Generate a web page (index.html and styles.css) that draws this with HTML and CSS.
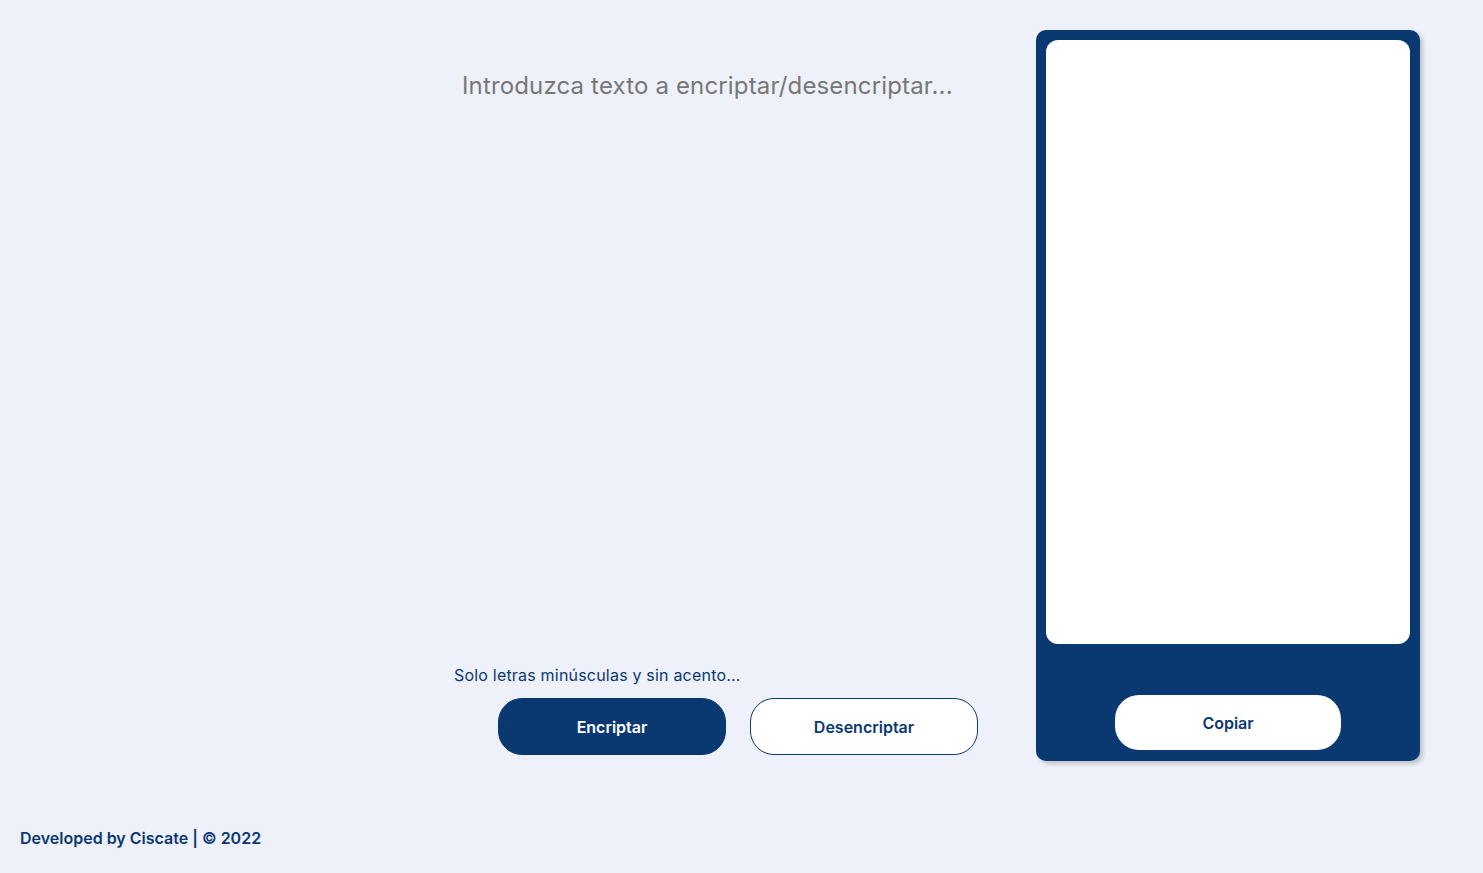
FILE: index.html
```html
<!DOCTYPE html>
<html lang="es">
<head>
<meta charset="utf-8">
<title>Encriptador</title>
<link rel="stylesheet" href="styles.css">
</head>
<body>
<div class="page">
  <main class="main">
    <section class="editor">
      <textarea class="input" placeholder="Introduzca texto a encriptar/desencriptar..."></textarea>
      <p class="hint">Solo letras minúsculas y sin acento...</p>
      <div class="actions">
        <button class="btn btn-primary">Encriptar</button>
        <button class="btn btn-outline">Desencriptar</button>
      </div>
    </section>
    <aside class="panel">
      <div class="output"></div>
      <div class="panel-actions">
        <button class="btn btn-copy">Copiar</button>
      </div>
    </aside>
  </main>
  <footer class="footer">Developed by Ciscate | © 2022</footer>
</div>
</body>
</html>
```
FILE: styles.css
```css
* { box-sizing: border-box; }
html, body { margin: 0; padding: 0; }
body {
  background: #eef1f9;
  font-family: Inter, "Liberation Sans", sans-serif;
  color: #0a3871;
}
.page {
  height: 873px;
  display: flex;
  flex-direction: column;
}
.main {
  display: flex;
  padding-top: 30px;
}
.editor {
  margin-left: 452px;
  width: 548px;
  display: flex;
  flex-direction: column;
  padding-top: 30px;
}
.input {
  height: 605px;
  border: none;
  outline: none;
  resize: none;
  background: transparent;
  padding: 10px 10px;
  font-family: Inter, "Liberation Sans", sans-serif;
  font-size: 24px;
  letter-spacing: 0.15px;
  line-height: 32px;
  color: #333;
}
.input::placeholder { color: #777; }
.hint {
  margin: 0;
  padding-left: 2px;
  font-size: 16px;
  letter-spacing: 0.2px;
  line-height: 20px;
  color: #0a3871;
}
.actions {
  display: flex;
  gap: 24px;
  margin-top: 13px;
  padding-left: 46px;
}
.btn {
  width: 228px;
  height: 57px;
  border-radius: 24px;
  font-family: Inter, "Liberation Sans", sans-serif;
  font-size: 16px;
  font-weight: 600;
  cursor: pointer;
}
.btn-primary {
  background: #0a3871;
  color: #fff;
  border: 1px solid #0a3871;
}
.btn-outline {
  background: #fff;
  color: #0a3871;
  border: 1px solid #0a3871;
}
.panel {
  margin-left: 36px;
  width: 384px;
  height: 731px;
  background: #0a3871;
  border-radius: 10px;
  padding: 10px;
  box-shadow: 3px 3px 4px rgba(0, 0, 0, 0.2);
  display: flex;
  flex-direction: column;
}
.output {
  height: 604px;
  background: #fff;
  border-radius: 12px;
}
.panel-actions {
  display: flex;
  justify-content: center;
  margin-top: 51px;
}
.btn-copy {
  width: 226px;
  height: 55px;
  background: #fff;
  color: #0a3871;
  border: none;
}
.footer {
  margin-top: auto;
  margin-bottom: 25px;
  padding-left: 20px;
  font-size: 16px;
  font-weight: 600;
  line-height: 20px;
  color: #0a3871;
}
```
